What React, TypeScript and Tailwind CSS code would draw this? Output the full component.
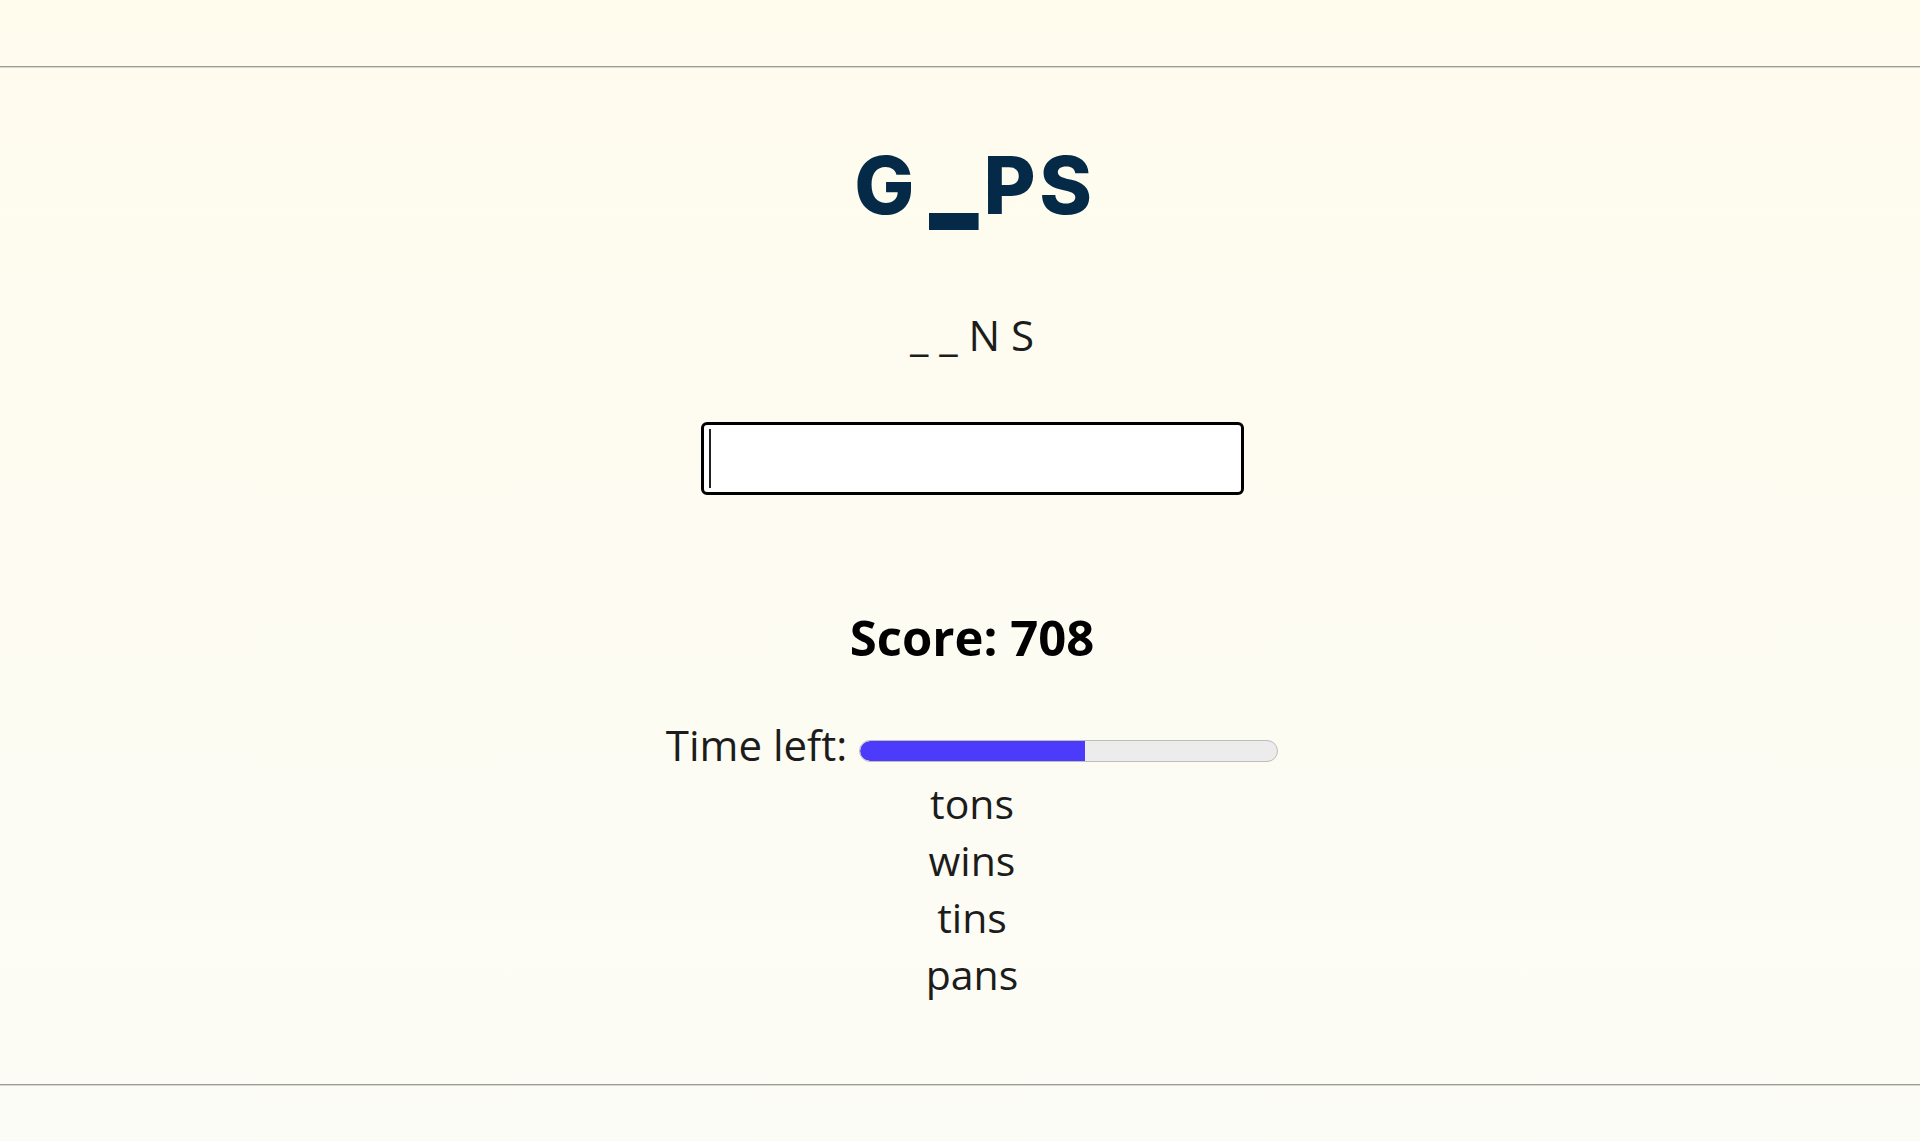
import React from 'react';

const words = ['tons', 'wins', 'tins', 'pans'];

const Divider: React.FC = () => (
  <div className="h-[2px] w-full border-t border-t-[#9c9c96] border-b border-b-[#d9d9d2]" />
);

const TimeBar: React.FC<{ pct: number }> = ({ pct }) => (
  <div className="mt-[24px] h-[22px] w-[419px] overflow-hidden rounded-full border border-[#bdbdbd] bg-[#ececec]">
    <div className="h-full rounded-l-full bg-[#4d3bfb]" style={{ width: `${pct}%` }} />
  </div>
);

export default function App() {
  return (
    <div className="min-h-screen bg-gradient-to-b from-[#fffcee] to-[#fcfcf6] font-['Open_Sans',sans-serif] text-[#1c1c1c]">
      <div className="h-[66px]" />
      <Divider />

      <main className="flex flex-col items-center pl-[24px]">
        <h1 className="mt-[68px] pl-[6px] font-['Inter',sans-serif] text-[80px] font-extrabold leading-[97px] tracking-[0.045em] text-[#042a47]">
          G<span className="ml-[17px] mr-[6px] inline-block origin-[50%_88%] scale-x-[1.28] scale-y-[1.7] leading-none">_</span>PS
        </h1>

        <p className="mt-[73px] text-[42px] leading-[57px]">_ _ N S</p>

        <div className="relative mt-[59px]">
          <input
            type="text"
            className="block h-[73px] w-[543px] rounded-[6px] border-[3px] border-black bg-white px-3 text-[36px] outline-none"
          />
          <span className="pointer-events-none absolute left-[8px] top-[7px] bottom-[7px] w-[2px] bg-[#222]" />
        </div>

        <div className="mt-[110px] text-[49px] font-bold leading-[65px] text-black">Score: 708</div>

        <div className="mt-[46px] flex items-start gap-[12px]">
          <span className="text-[42px] leading-[57px]">Time left:</span>
          <TimeBar pct={54} />
        </div>

        <ul className="mt-[2px] flex flex-col items-center">
          {words.map((w) => (
            <li key={w} className="text-[41px] leading-[57px]">
              {w}
            </li>
          ))}
        </ul>
      </main>

      <div className="mt-[81px]">
        <Divider />
      </div>
    </div>
  );
}
